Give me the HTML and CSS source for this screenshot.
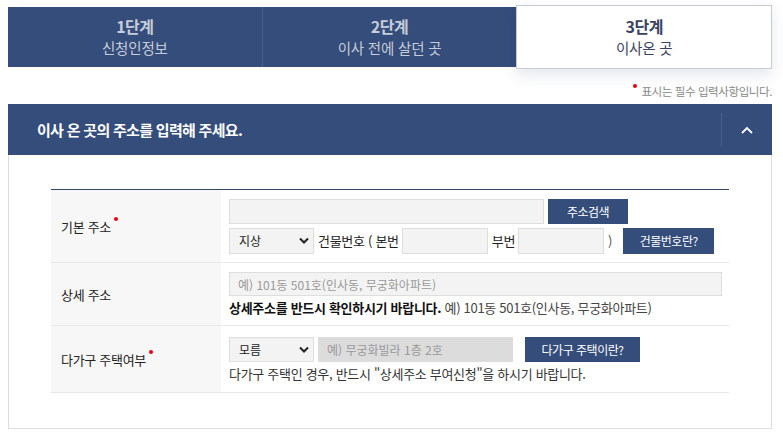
FILE: index.html
```html
<!DOCTYPE html>
<html lang="ko">
<head>
<meta charset="utf-8">
<link rel="stylesheet" href="styles.css">
</head>
<body>
<div class="steps">
  <div class="step"><strong>1단계</strong><span>신청인정보</span></div>
  <div class="step"><strong>2단계</strong><span>이사 전에 살던 곳</span></div>
  <div class="step active"><strong>3단계</strong><span>이사온 곳</span></div>
</div>
<p class="notice"><i class="dot"></i>표시는 필수 입력사항입니다.</p>
<div class="section-head">
  <h2>이사 온 곳의 주소를 입력해 주세요.</h2>
  <button class="toggle" type="button" aria-label="접기"><svg width="12" height="8" viewBox="0 0 12 8"><path d="M1 7 L6 2 L11 7" fill="none" stroke="#fff" stroke-width="1.8"/></svg></button>
</div>
<div class="panel">
  <div class="table">
    <div class="row r1">
      <div class="label">기본 주소<i class="req"></i></div>
      <div class="cell">
        <div class="line">
          <input class="inp addr" type="text">
          <button class="btn b-search" type="button">주소검색</button>
        </div>
        <div class="line">
          <div class="select s1">지상<svg width="10" height="7" viewBox="0 0 10 7"><path d="M1 1.5 L5 5.5 L9 1.5" fill="none" stroke="#222" stroke-width="2"/></svg></div>
          <span class="txt">건물번호 ( 본번</span>
          <input class="inp num" type="text">
          <span class="txt sub">부번</span>
          <input class="inp num" type="text">
          <span class="txt paren">)</span>
          <button class="btn b-bld" type="button">건물번호란?</button>
        </div>
      </div>
    </div>
    <div class="row r2">
      <div class="label">상세 주소</div>
      <div class="cell">
        <div class="inp detail">예) 101동 501호(인사동, 무궁화아파트)</div>
        <p class="help"><b>상세주소를 반드시 확인하시기 바랍니다.</b> 예) 101동 501호(인사동, 무궁화아파트)</p>
      </div>
    </div>
    <div class="row r3">
      <div class="label">다가구 주택여부<i class="req"></i></div>
      <div class="cell">
        <div class="line">
          <div class="select s2">모름<svg width="10" height="7" viewBox="0 0 10 7"><path d="M1 1.5 L5 5.5 L9 1.5" fill="none" stroke="#222" stroke-width="2"/></svg></div>
          <div class="inp disabled">예) 무궁화빌라 1층 2호</div>
          <button class="btn b-multi" type="button">다가구 주택이란?</button>
        </div>
        <p class="help plain">다가구 주택인 경우, 반드시 "상세주소 부여신청"을 하시기 바랍니다.</p>
      </div>
    </div>
  </div>
</div>
</body>
</html>
```
FILE: styles.css
```css
* { box-sizing: border-box; }
body {
  margin: 0;
  padding: 7px 11px 0 8px;
  background: #fff;
  font-family: "Noto Sans CJK KR", "Noto Sans", sans-serif;
  color: #222;
}
.steps {
  display: flex;
  height: 60px;
  background: #344d7a;
}
.step {
  flex: 1;
  display: flex;
  flex-direction: column;
  align-items: center;
  justify-content: center;
  color: #c6ccd9;
  line-height: 22px;
}
.step + .step { border-left: 1px solid #4a6291; }
.step strong { font-size: 16px; font-weight: 700; letter-spacing: -0.5px; }
.step span { font-size: 14.5px; letter-spacing: -0.2px; }
.step.active {
  background: #fff;
  color: #3a4361;
  border: 1px solid #c6cad5;
  margin: -2px 0;
  box-shadow: 0 6px 14px rgba(40, 60, 110, 0.12);
}
.notice {
  margin: 0;
  height: 37px;
  display: flex;
  align-items: center;
  justify-content: flex-end;
  font-size: 11.5px;
  color: #888;
  letter-spacing: -0.4px;
  padding-top: 10px;
}
.notice .dot {
  width: 4px; height: 4px; border-radius: 50%;
  background: #e60012;
  margin: 0 4px 10px 0;
}
.section-head {
  height: 51px;
  background: #344d7a;
  display: flex;
  align-items: center;
  justify-content: space-between;
  padding-left: 29px;
}
.section-head h2 {
  margin: 0;
  font-size: 15px;
  font-weight: 700;
  color: #fff;
  letter-spacing: -0.7px;
}
.toggle {
  width: 51px;
  height: 33px;
  border: 0;
  border-left: 1px solid #4a6291;
  background: none;
  padding: 0;
  display: flex;
  align-items: center;
  justify-content: center;
}
.panel {
  border: 1px solid #ddd;
  border-top: 0;
  padding: 34px 42px 35px;
}
.table { border-top: 1px solid #36466b; }
.row {
  display: grid;
  grid-template-columns: 170px 1fr;
  border-bottom: 1px solid #e8e8e8;
}
.r1 { height: 73px; }
.r2 { height: 63px; }
.r3 { height: 67px; }
.label {
  background: #f7f7f7;
  display: flex;
  align-items: center;
  padding-left: 10px;
  font-size: 13px;
  letter-spacing: -0.3px;
}
.req {
  width: 4px; height: 4px; border-radius: 50%;
  background: #e60012;
  align-self: center;
  margin: -14px 0 0 3px;
}
.cell {
  padding: 0 8px;
  display: flex;
  flex-direction: column;
  justify-content: center;
  gap: 4px;
}
.line { display: flex; align-items: center; }
.inp {
  height: 25px;
  border: 1px solid #dedede;
  background: #f3f3f3;
  font: inherit;
  font-size: 12px;
  padding: 0 8px;
  display: flex;
  align-items: center;
  color: #999;
}
.addr { width: 315px; }
.num { width: 86px; height: 26px; }
.detail { width: 493px; height: 24px; }
.disabled { width: 195px; background: #dcdcdc; margin-left: 4px; color: #999; }
.select {
  height: 26px;
  width: 85px;
  border: 1px solid #dedede;
  background: #f3f3f3;
  display: flex;
  align-items: center;
  justify-content: space-between;
  padding: 0 4px 0 9px;
  font-size: 12px;
  color: #222;
}
.s2 { height: 25px; }
.txt { font-size: 13px; color: #222; margin: 0 3px 0 4px; letter-spacing: -0.3px; }
.sub { margin-left: 4px; }
.paren { margin: 0 11px 0 4px; color: #555; }
.btn {
  height: 26px;
  background: #344d7a;
  color: #fff;
  border: 0;
  font-family: inherit;
  font-size: 12px;
  letter-spacing: -0.5px;
  padding: 0;
}
.b-search { width: 80px; height: 25px; margin-left: 4px; }
.b-bld { width: 91px; }
.b-multi { width: 115px; height: 25px; margin-left: 12px; }
.help {
  margin: 0;
  font-size: 13px;
  color: #444;
  letter-spacing: -0.3px;
  line-height: 16px;
}
.help b { color: #111; font-size: 13px; }
.help.plain { color: #333; font-size: 13px; }
```
